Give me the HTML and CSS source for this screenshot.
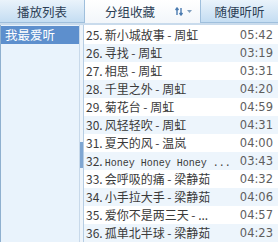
FILE: index.html
```html
<!DOCTYPE html>
<html lang="zh">
<head>
    <meta charset="UTF-8">
    <title>播放列表</title>
    <link rel="stylesheet" href="styles.css">
</head>
<body>
    <div class="tabs">
        <div class="tab tab-blue tab-first">播放列表</div>
        <div class="tab tab-mid">
            <span>分组收藏</span>
            <span class="sort">
                <svg width="9" height="9" viewBox="0 0 9 9">
                    <path d="M2 1v7M0.5 3L2 1l1.5 2" stroke="#4a7bb0" stroke-width="1.4" fill="none"/>
                    <path d="M6 8V1M4.5 6L6 8l1.5-2" stroke="#4a7bb0" stroke-width="1.4" fill="none"/>
                </svg>
                <svg width="5" height="3" viewBox="0 0 5 3"><path d="M0 0h5L2.5 3z" fill="#7f9fbf"/></svg>
            </span>
        </div>
        <div class="tab tab-blue tab-last">随便听听</div>
    </div>
    <div class="main">
        <div class="side">
            <div class="group active">我最爱听</div>
        </div>
        <div class="splitter"><div class="handle"></div></div>
        <div class="list">
            <div class="row"><span class="name"><span class="num">25.</span>新小城故事 - 周虹</span><span class="time">05:42</span></div>
            <div class="row"><span class="name"><span class="num">26.</span>寻找 - 周虹</span><span class="time">03:19</span></div>
            <div class="row"><span class="name"><span class="num">27.</span>相思 - 周虹</span><span class="time">03:31</span></div>
            <div class="row"><span class="name"><span class="num">28.</span>千里之外 - 周虹</span><span class="time">04:20</span></div>
            <div class="row"><span class="name"><span class="num">29.</span>菊花台 - 周虹</span><span class="time">04:59</span></div>
            <div class="row"><span class="name"><span class="num">30.</span>风轻轻吹 - 周虹</span><span class="time">04:31</span></div>
            <div class="row"><span class="name"><span class="num">31.</span>夏天的风 - 温岚</span><span class="time">04:00</span></div>
            <div class="row"><span class="name"><span class="num">32.</span><span class="latin">Honey Honey Honey ...</span></span><span class="time">03:43</span></div>
            <div class="row"><span class="name"><span class="num">33.</span>会呼吸的痛 - 梁静茹</span><span class="time">04:32</span></div>
            <div class="row"><span class="name"><span class="num">34.</span>小手拉大手 - 梁静茹</span><span class="time">04:06</span></div>
            <div class="row"><span class="name"><span class="num">35.</span>爱你不是两三天 - ...</span><span class="time">04:57</span></div>
            <div class="row"><span class="name"><span class="num">36.</span>孤单北半球 - 梁静茹</span><span class="time">04:23</span></div>
        </div>
    </div>
</body>
</html>
```

FILE: styles.css
```css
body {
    margin: 0;
    width: 278px;
    height: 242px;
    overflow: hidden;
    background-color: #fff;
    font-family: "Noto Sans CJK SC", "DejaVu Sans", sans-serif;
    font-size: 12px;
    color: #3c3c3c;
}
.tabs {
    display: flex;
    height: 23px;
    border-bottom: 2px solid #c9dbec;
    background-color: #f7fafd;
}
.tab {
    display: flex;
    align-items: center;
    justify-content: center;
    font-size: 12.5px;
    color: #2c3e55;
}
.tab-blue {
    background: linear-gradient(#eaf3fb, #c4ddf2);
    border: 1px solid #9fbfdc;
    border-top: none;
    height: 22px;
}
.tab-first {
    width: 84px;
    border-left: none;
}
.tab-last {
    width: 77px;
    border-right: none;
}
.tab-mid {
    flex: 1;
    gap: 20px;
    padding-left: 12px;
    background: linear-gradient(#ffffff, #f2f6fa);
}
.sort {
    display: flex;
    align-items: center;
    gap: 3px;
}
.main {
    display: flex;
    height: 217px;
}
.side {
    width: 78px;
    background-color: #e9f3fc;
    border-left: 1px solid #8fb0cf;
    border-right: 1px solid #c8d9ea;
    padding-top: 1px;
}
.group {
    height: 18px;
    line-height: 18px;
    padding-left: 4px;
    font-size: 12.5px;
}
.group.active {
    background-color: #5d8fcd;
    color: #fff;
}
.splitter {
    width: 3px;
    background-color: #eef4fa;
    border-right: 1px solid #b6cde3;
    display: flex;
    align-items: center;
}
.handle {
    width: 3px;
    height: 26px;
    margin-top: 42px;
    background-color: #7fa6d2;
}
.list {
    flex: 1;
    padding-top: 1px;
}
.row {
    display: flex;
    justify-content: space-between;
    height: 18px;
    line-height: 18px;
    padding: 0 5px 0 2px;
    white-space: nowrap;
}
.row:nth-child(even) {
    background-color: #edf5fc;
}
.name {
    color: #3a3a3a;
}
.num {
    margin-right: 2px;
}
.latin {
    font-family: "Liberation Mono", monospace;
    font-size: 10px;
}
.time {
    color: #5e5e5e;
    font-family: "DejaVu Sans", sans-serif;
    font-size: 11.5px;
}
```
